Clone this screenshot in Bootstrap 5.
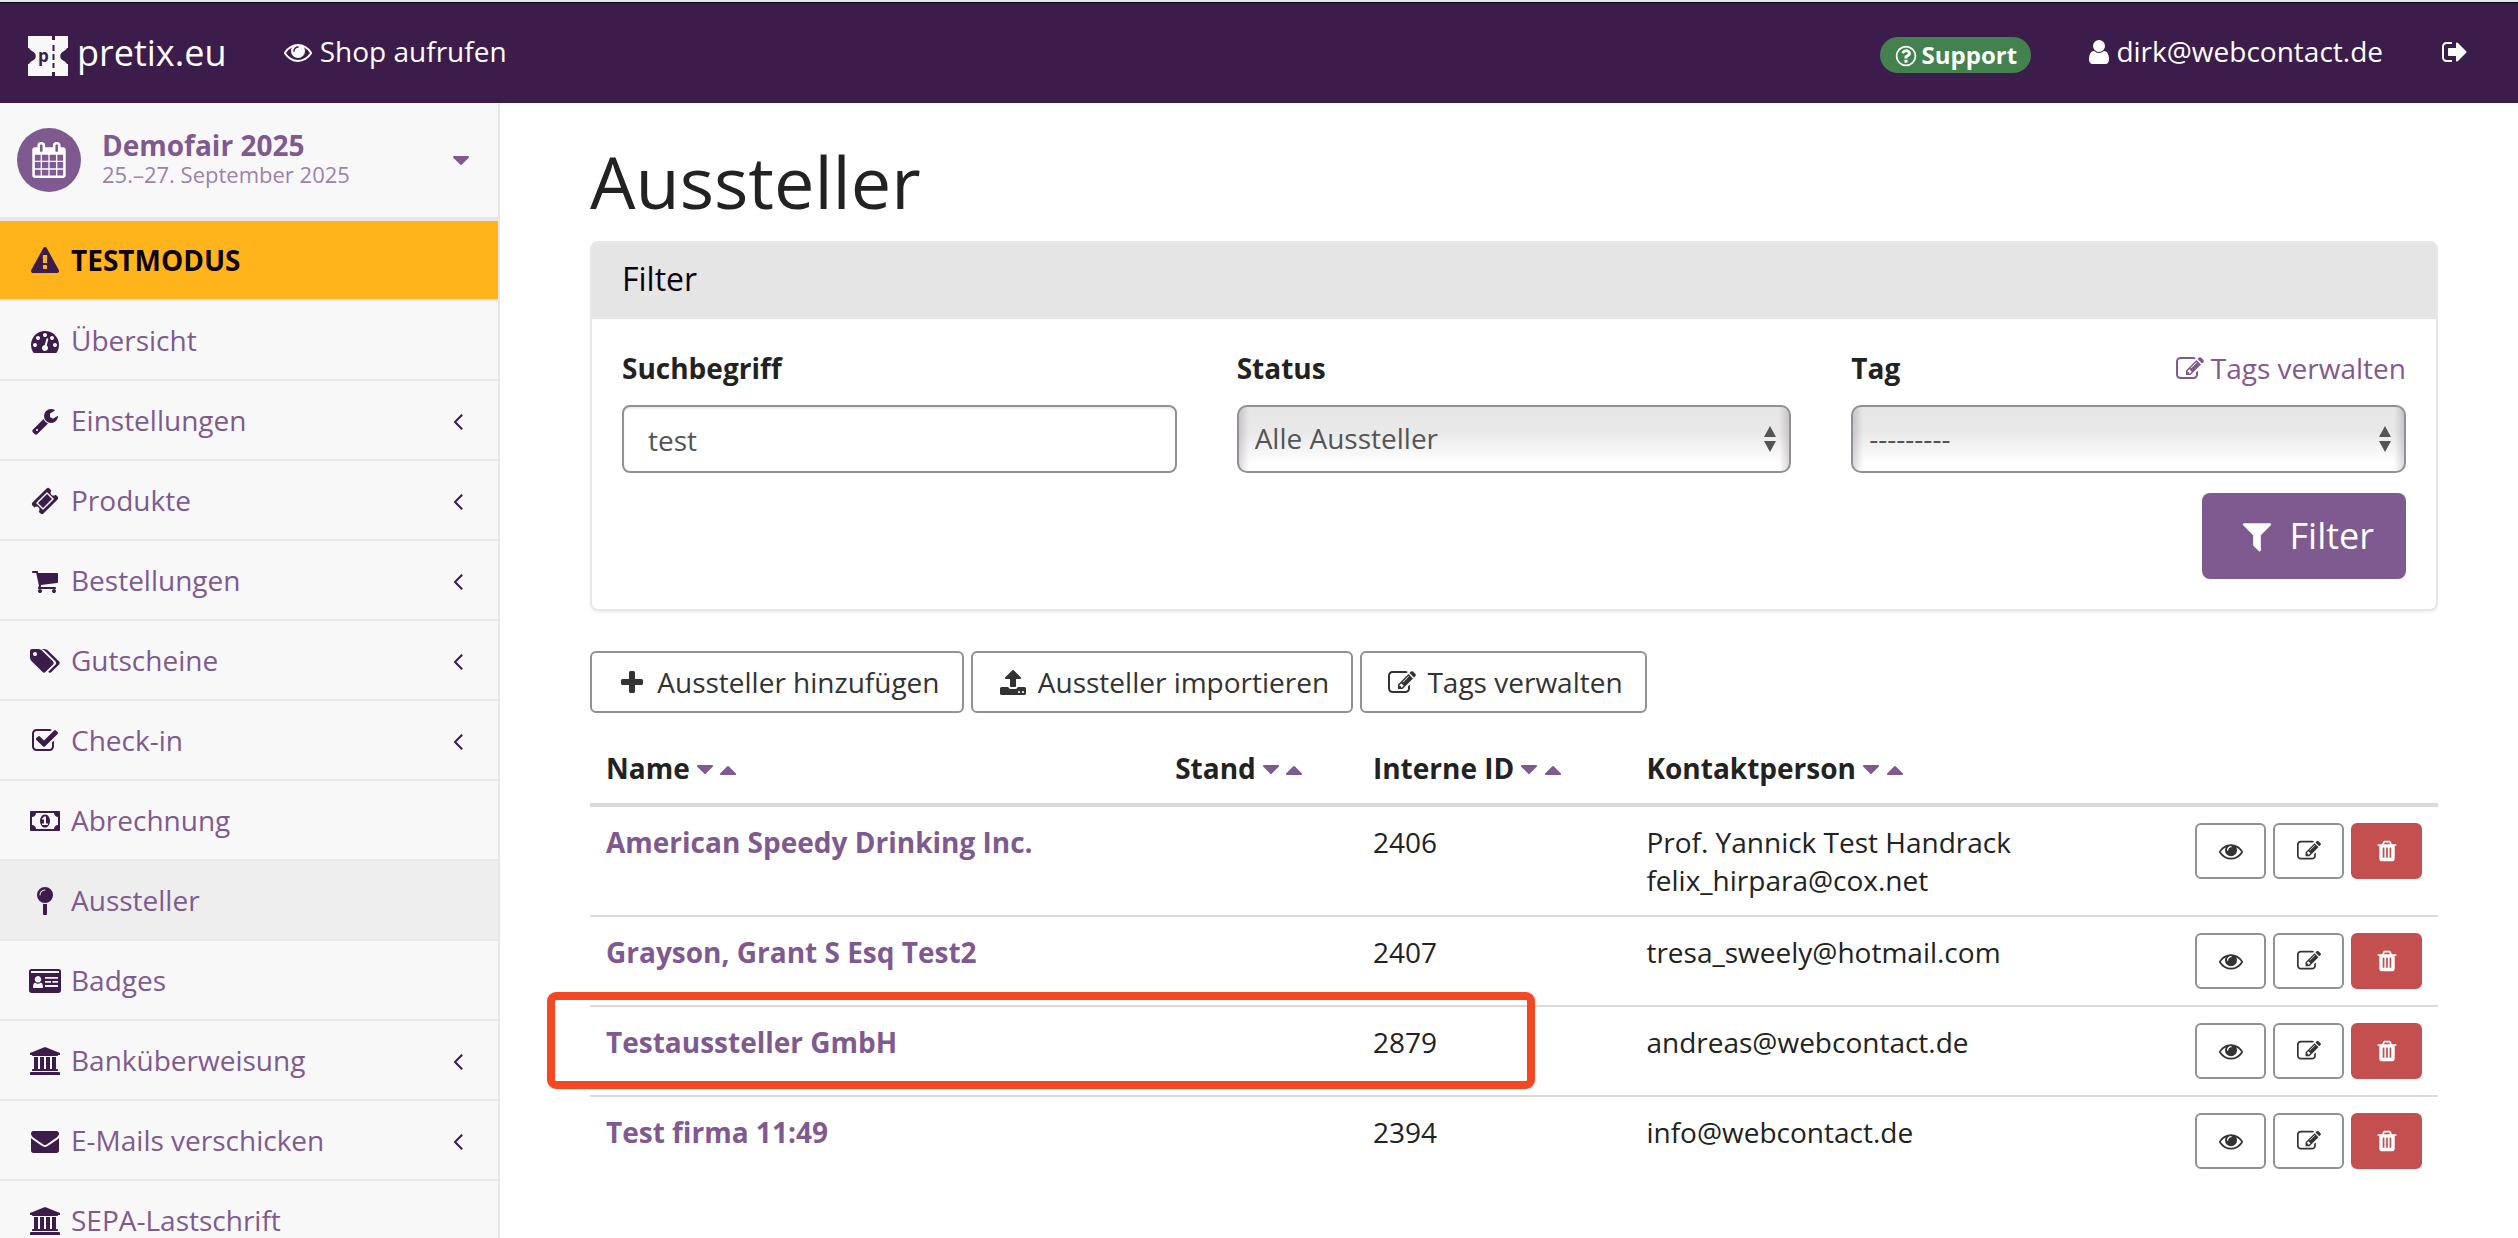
<!DOCTYPE html>
<html lang="de">
<head>
<meta charset="utf-8">
<meta name="viewport" content="width=device-width, initial-scale=1">
<title>Aussteller – pretix.eu</title>
<link href="https://cdn.jsdelivr.net/npm/bootstrap@5.3.0/dist/css/bootstrap.min.css" rel="stylesheet">
<style>
:root { --brand: #7f5a91; --brand-dark: #3b1c4a; --line: #e7e7e7; --edge: #919193; }
body { font-family: "Open Sans", "Noto Sans", sans-serif; font-size: 28px; line-height: 38px; color: #222; background: #fff; }
a { color: var(--brand); text-decoration: none; }
.ico { height: 28px; width: 28px; fill: currentColor; vertical-align: -4px; flex: none; }
.ico-wide { width: 36px; }
.ico-caret { width: 16px; }
.ico-user { width: 20px; }

.topbar { background: var(--brand-dark); border-top: 2px solid #e4e6ea; box-shadow: inset 0 1px #0c0414; padding: 29px 49px 27px 28px; line-height: 40px; }
.topbar a { color: #fff; }
.brand-name { font-size: 36px; line-height: 44px; margin-left: 9px; }
.brand-mark { width: 40px; height: 40px; margin-top: 5px; }
.nav-gap { margin-left: 58px; }
.support-pill { background: #43814f; border-radius: 18px; font-size: 24px; font-weight: 700; line-height: 36px; padding: 0 14px; margin-top: 6px; }
.support-pill .ico { width: 24px; height: 24px; margin-right: 4px; }

.sidebar { width: 500px; flex: none; background: #f8f8f8; border-right: 2px solid var(--line); }
.event-head { height: 118px; border-bottom: 4px solid var(--line); padding: 0 23px 0 17px; }
.event-dot { width: 64px; height: 64px; border-radius: 50%; background: var(--brand); color: #fff; }
.event-dot .ico { width: 36px; height: 36px; }
.event-text { line-height: 29px; padding-left: 21px; }
.event-text small { font-size: 22px; opacity: .75; }
.side-link { line-height: 40px; padding: 19px 26px 19px 29px; border-bottom: 2px solid var(--line); white-space: nowrap; }
.side-link .ico { margin-top: 7px; color: var(--brand-dark); }
.side-link .lead-ico { width: 32px; margin-right: 10px; }
.side-link.current { background: #eee; }
.side-link.testmode { background: #ffb41c; color: #0d0212; font-weight: 700; }

.main-area { padding: 31px 80px 0 90px; }
.main-area h1 { font-size: 72px; font-weight: 400; line-height: 80px; margin-bottom: 20px; padding-top: 7px; }
.panel { border: 2px solid var(--line); border-radius: 8px; box-shadow: 0 2px 2px rgba(0,0,0,.05); margin-bottom: 40px; }
.panel-head { background: #e5e5e5; color: #0d0212; font-size: 32px; font-weight: 400; line-height: 36px; padding: 18px 30px 22px; margin: 0; border-radius: 4px 4px 0 0; }
.panel-body { padding: 30px; }
.field-label { font-weight: 700; }
.field-top { margin-bottom: 18px; }
.filter-grid { --bs-gutter-x: 60px; }
.filter-grid .form-control, .filter-grid .form-select { height: 68px; border: 2px solid var(--edge); color: #555; font-size: 28px; line-height: 40px; }
.filter-grid .form-control { padding: 12px 24px 10px; border-radius: 8px; box-shadow: inset 0 2px 2px rgba(0,0,0,.07); }
.filter-grid .form-select {
  border-radius: 10px; padding: 11px 50px 13px 16px;
  background:
    url("data:image/svg+xml,%3Csvg xmlns='http://www.w3.org/2000/svg' width='14' height='26'%3E%3Cpath fill='%23555' d='M7 0l6 11H1zM7 26l6-11H1z'/%3E%3C/svg%3E") no-repeat right 12px center / 14px 26px,
    linear-gradient(90deg, rgba(90,70,100,.22), transparent 10px, transparent calc(100% - 10px), rgba(90,70,100,.22)),
    linear-gradient(#e6e6e6, #e9e9e9 40%, #fff 90%);
}
.btn-filter { background: var(--brand); color: #fff; font-size: 36px; line-height: 46px; padding: 20px 32px; border: 0; border-radius: 8px; margin-top: 20px; }
.btn-filter .ico { width: 46px; height: 36px; vertical-align: -5px; }
.btn-plain { color: #333; border: 2px solid var(--edge); border-radius: 6px; font-size: 28px; line-height: 40px; padding: 9px 22px; background: #fff; }
.tool-row { gap: 7px; margin-bottom: 20px; }

.exh-table { --bs-table-bg: transparent; margin: 0; color: #222; table-layout: fixed; }
.exh-table > :not(caption) > * > * { padding: 16px; border-bottom: 0; border-top: 2px solid #dadada; color: inherit; }
.exh-table > thead > tr > th { border-top: 0; border-bottom: 4px solid #dadada; white-space: nowrap; }
.exh-table > tbody > tr:first-child > td { border-top: 0; }
.exh-table td a { font-weight: 700; }
.w-name { width: 30.8%; } .w-stand { width: 10.7%; } .w-id { width: 14.8%; } .w-act { width: 260px; }
.act-row { gap: 7px; }
.btn-act { width: 71px; height: 56px; border: 2px solid var(--edge); border-radius: 6px; background: #fff; color: #333; padding: 0; }
.btn-act .ico { width: 24px; height: 24px; }
.btn-act.remove { background: #c44f4f; border-color: #c44f4f; color: #fff; }
/* callout frame drawn over the row that the guide points to */
.callout-frame { position: absolute; left: -43px; top: -15px; width: 988px; height: 97px; border: 8px solid #f44723; border-radius: 9px; pointer-events: none; z-index: 2; }
</style>
</head>
<body class="vh-100 d-flex flex-column overflow-hidden">
<svg class="d-none" xmlns="http://www.w3.org/2000/svg">
<symbol id="eye" viewBox="0 0 1792 1792"><path d="M1664 960q-152-236-381-353 61 104 61 225 0 185-131.5 316.5t-316.5 131.5-316.5-131.5-131.5-316.5q0-121 61-225-229 117-381 353 133 205 333.5 326.5t434.5 121.5 434.5-121.5 333.5-326.5zm-720-384q0-20-14-34t-34-14q-125 0-214.5 89.5t-89.5 214.5q0 20 14 34t34 14 34-14 14-34q0-86 61-147t147-61q20 0 34-14t14-34zm848 384q0 34-20 69-140 230-376.5 368.5t-499.5 138.5-499.5-139-376.5-368q-20-35-20-69t20-69q140-229 376.5-368t499.5-139 499.5 139 376.5 368q20 35 20 69z"/></symbol>
<symbol id="edit" viewBox="0 0 1792 1792"><path d="M888 1184l116-116-152-152-116 116v56h96v96h56zm440-720q-16-16-33 1l-350 350q-17 17-1 33t33-1l350-350q17-17 1-33zm80 594v190q0 119-84.5 203.5t-203.5 84.5h-832q-119 0-203.5-84.5t-84.5-203.5v-832q0-119 84.5-203.5t203.5-84.5h832q63 0 117 25 15 7 18 23 3 17-9 29l-49 49q-14 14-32 8-23-6-45-6h-832q-66 0-113 47t-47 113v832q0 66 47 113t113 47h832q66 0 113-47t47-113v-126q0-13 9-22l64-64q15-15 35-7t20 29zm-96-738l288 288-672 672h-288v-288zm444 132l-92 92-288-288 92-92q28-28 68-28t68 28l152 152q28 28 28 68t-28 68z"/></symbol>
<symbol id="trash" viewBox="0 0 1792 1792"><path d="M704 1376v-704q0-14-9-23t-23-9h-64q-14 0-23 9t-9 23v704q0 14 9 23t23 9h64q14 0 23-9t9-23zm256 0v-704q0-14-9-23t-23-9h-64q-14 0-23 9t-9 23v704q0 14 9 23t23 9h64q14 0 23-9t9-23zm256 0v-704q0-14-9-23t-23-9h-64q-14 0-23 9t-9 23v704q0 14 9 23t23 9h64q14 0 23-9t9-23zm-544-992h448l-48-117q-7-9-17-11h-317q-10 2-17 11zm928 32v64q0 14-9 23t-23 9h-96v948q0 83-47 143.5t-113 60.5h-832q-66 0-113-58.5t-47-141.5v-952h-96q-14 0-23-9t-9-23v-64q0-14 9-23t23-9h309l70-167q15-37 54-63t79-26h320q40 0 79 26t54 63l70 167h309q14 0 23 9t9 23z"/></symbol>
<symbol id="help" viewBox="0 0 1792 1792"><path d="M1008 1200v160q0 14-9 23t-23 9h-160q-14 0-23-9t-9-23v-160q0-14 9-23t23-9h160q14 0 23 9t9 23zm256-496q0 50-15 90t-45.5 69-52 44-59.5 36q-32 18-46.5 28t-26 24-11.5 29v32q0 14-9 23t-23 9h-160q-14 0-23-9t-9-23v-68q0-35 10.5-64.5t24-47.5 39-35.5 41-25.5 44.5-21q53-25 75-43t22-49q0-42-43.5-71.5t-95.5-29.5q-56 0-95 27-29 20-80 83-9 12-25 12-11 0-19-6l-108-82q-10-7-12-20t5-23q122-192 349-192 129 0 238.5 89.5t109.5 214.5z"/><circle cx="896" cy="896" r="704" fill="none" stroke="currentColor" stroke-width="128"/></symbol>
<symbol id="user" viewBox="256 0 1280 1792"><path d="M1536 1399q0 109-62.5 187t-150.5 78h-854q-88 0-150.5-78t-62.5-187q0-85 8.5-160.5t31.5-152 58.5-131 94-89 134.5-34.5q131 128 313 128t313-128q76 0 134.5 34.5t94 89 58.5 131 31.5 152 8.5 160.5zm-256-887q0 159-112.5 271.5t-271.5 112.5-271.5-112.5-112.5-271.5 112.5-271.5 271.5-112.5 271.5 112.5 112.5 271.5z"/></symbol>
<symbol id="signout" viewBox="0 0 1792 1792"><path d="M704 1440q0 4 1 20t.5 26.5-3 23.5-10 19.5-20.5 6.5h-320q-119 0-203.5-84.5t-84.5-203.5v-704q0-119 84.5-203.5t203.5-84.5h320q13 0 22.5 9.5t9.5 22.5q0 4 1 20t.5 26.5-3 23.5-10 19.5-20.5 6.5h-320q-66 0-113 47t-47 113v704q0 66 47 113t113 47h312l11.5 1 11.5 3 8 5.5 7 9 2 13.5zm928-544q0 26-19 45l-544 544q-19 19-45 19t-45-19-19-45v-288h-448q-26 0-45-19t-19-45v-384q0-26 19-45t45-19h448v-288q0-26 19-45t45-19 45 19l544 544q19 19 19 45z"/></symbol>
<symbol id="calendar" viewBox="0 0 1792 1792"><path d="M192 1664h288v-288h-288v288zm352 0h320v-288h-320v288zm-352-352h288v-320h-288v320zm352 0h320v-320h-320v320zm-352-384h288v-288h-288v288zm736 736h320v-288h-320v288zm-384-736h320v-288h-320v288zm768 736h288v-288h-288v288zm-384-352h320v-320h-320v320zm-352-864v-288q0-13-9.5-22.5t-22.5-9.5h-64q-13 0-22.5 9.5t-9.5 22.5v288q0 13 9.5 22.5t22.5 9.5h64q13 0 22.5-9.5t9.5-22.5zm736 864h288v-320h-288v320zm-384-384h320v-288h-320v288zm384 0h288v-288h-288v288zm32-480v-288q0-13-9.5-22.5t-22.5-9.5h-64q-13 0-22.5 9.5t-9.5 22.5v288q0 13 9.5 22.5t22.5 9.5h64q13 0 22.5-9.5t9.5-22.5zm384-64v1280q0 52-38 90t-90 38h-1408q-52 0-90-38t-38-90v-1280q0-52 38-90t90-38h128v-96q0-66 47-113t113-47h64q66 0 113 47t47 113v96h384v-96q0-66 47-113t113-47h64q66 0 113 47t47 113v96h128q52 0 90 38t38 90z"/></symbol>
<symbol id="warn" viewBox="0 0 1792 1792"><path d="M1024 1375v-190q0-14-9.500-23.500t-22.500-9.500h-192q-13 0-22.500 9.500t-9.500 23.500v190q0 14 9.500 23.500t22.500 9.500h192q13 0 22.500-9.500t9.500-23.500zm-2-374l18-459q0-12-10-19-13-11-24-11h-220q-11 0-24 11-10 7-10 21l17 457q0 10 10 16.500t24 6.500h185q14 0 23.500-6.500t10.500-16.500zm-14-934l768 1408q35 63-2 126-17 29-46.500 46t-63.500 17h-1536q-34 0-63.500-17t-46.500-46q-37-63-2-126l768-1408q17-31 47-49t65-18 65 18 47 49z"/></symbol>
<symbol id="dash" viewBox="0 0 1792 1792"><path d="M384 1152q0-53-37.5-90.5t-90.5-37.5-90.5 37.5-37.5 90.5 37.5 90.5 90.5 37.5 90.5-37.5 37.5-90.500zm192-448q0-53-37.5-90.5t-90.5-37.5-90.5 37.5-37.5 90.5 37.5 90.5 90.5 37.5 90.5-37.5 37.5-90.500zm428 481l101-382q6-26-7.5-48.5t-38.5-29.5-48 6.5-30 39.5l-101 382q-60 5-107 43.5t-63 98.5q-20 77 20 146t117 89 146-20 89-117q16-60-6-117t-72-91zm660-33q0-53-37.5-90.5t-90.5-37.5-90.5 37.5-37.5 90.5 37.5 90.5 90.5 37.5 90.5-37.5 37.5-90.5zm-640-640q0-53-37.5-90.5t-90.5-37.5-90.5 37.5-37.5 90.5 37.5 90.5 90.5 37.5 90.5-37.5 37.5-90.5zm448 192q0-53-37.5-90.5t-90.5-37.5-90.5 37.5-37.5 90.5 37.5 90.5 90.5 37.5 90.5-37.5 37.5-90.5zm320 448q0 261-141 483-19 29-54 29h-1402q-35 0-54-29-141-221-141-483 0-182 71-348t191-286 286-191 348-71 348 71 286 191 191 286 71 348z"/></symbol>
<symbol id="wrench" viewBox="0 0 1792 1792"><path d="M448 1472q0-26-19-45t-45-19-45 19-19 45 19 45 45 19 45-19 19-45zm644-420l-682 682q-37 37-90 37-52 0-91-37l-106-108q-38-36-38-90 0-53 38-91l681-681q39 98 114.5 173.5t173.5 114.5zm634-435q0 39-23 106-47 134-164.5 217.5t-258.5 83.5q-185 0-316.5-131.5t-131.5-316.5 131.5-316.5 316.5-131.5q58 0 121.5 16.5t107.5 46.5q16 11 16 28t-16 28l-293 169v224l193 107q5-3 79-48.5t135.5-81 70.5-35.5q15 0 23.5 10t8.5 25z"/></symbol>
<symbol id="ticket" viewBox="0 0 1792 1792"><path d="M1024 452l316 316-572 572-316-316zm-211 979l618-618q19-19 19-45t-19-45l-362-362q-18-18-45-18t-45 18l-618 618q-19 19-19 45t19 45l362 362q18 18 45 18t45-18zm889-637l-907 908q-37 37-90.5 37t-90.5-37l-126-126q56-56 56-136t-56-136-136-56-136 56l-125-126q-37-37-37-90.5t37-90.5l907-906q37-37 90.5-37t90.5 37l125 125q-56 56-56 136t56 136 136 56 136-56l126 125q37 37 37 90.5t-37 90.5z"/></symbol>
<symbol id="cart" viewBox="0 0 1792 1792"><path d="M704 1536q0 52-38 90t-90 38-90-38-38-90 38-90 90-38 90 38 38 90zm896 0q0 52-38 90t-90 38-90-38-38-90 38-90 90-38 90 38 38 90zm128-1088v512q0 24-16.5 42.5t-40.5 21.5l-1044 122q13 60 13 70 0 16-24 64h920q26 0 45 19t19 45-19 45-45 19h-1024q-26 0-45-19t-19-45q0-11 8-31.5t16-36 21.5-40 15.5-29.5l-177-823h-204q-26 0-45-19t-19-45 19-45 45-19h256q16 0 28.5 6.5t19.5 15.5 13 24.5 8 26 5.5 29.5 4.5 26h1201q26 0 45 19t19 45z"/></symbol>
<symbol id="tags" viewBox="0 0 1920 1792"><path d="M448 448q0-53-37.5-90.5t-90.5-37.5-90.5 37.5-37.5 90.5 37.5 90.5 90.5 37.5 90.5-37.5 37.5-90.5zm1067 576q0 53-37 90l-491 492q-39 37-91 37-53 0-90-37l-715-716q-38-37-64.5-101t-26.5-117v-416q0-52 38-90t90-38h416q53 0 117 26.5t102 64.5l715 714q37 39 37 91zm384 0q0 53-37 90l-491 492q-39 37-91 37-36 0-59-14t-53-45l470-470q37-37 37-90 0-52-37-91l-715-714q-38-38-102-64.5t-117-26.5h224q53 0 117 26.5t102 64.5l715 714q37 39 37 91z"/></symbol>
<symbol id="check" viewBox="0 0 1792 1792"><path d="M1472 930v318q0 119-84.5 203.5t-203.5 84.5h-832q-119 0-203.5-84.5t-84.5-203.5v-832q0-119 84.5-203.5t203.5-84.5h832q63 0 117 25 15 7 18 23 3 17-9 29l-49 49q-10 10-23 10-3 0-9-2-23-6-45-6h-832q-66 0-113 47t-47 113v832q0 66 47 113t113 47h832q66 0 113-47t47-113v-254q0-13 9-22l64-64q10-10 23-10 6 0 12 3 20 8 20 29zm231-489l-814 814q-24 24-57 24t-57-24l-430-430q-24-24-24-57t24-57l110-110q24-24 57-24t57 24l263 263 647-647q24-24 57-24t57 24l110 110q24 24 24 57t-24 57z"/></symbol>
<symbol id="money" viewBox="0 0 1920 1792"><path d="M768 1152h384v-96h-128v-448h-114l-148 137 77 80q42-37 55-57h2v288h-128v96zm512-256q0 70-21 142t-59.5 134-101.5 101-138 39-138-39-101.5-101-59.5-134-21-142 21-142 59.5-134 101.5-101 138-39 138 39 101.5 101 59.5 134 21 142zm512 256v-512q-106 0-181-75t-75-181h-1152q0 106-75 181t-181 75v512q106 0 181 75t75 181h1152q0-106 75-181t181-75zm128-832v1152q0 26-19 45t-45 19h-1792q-26 0-45-19t-19-45v-1152q0-26 19-45t45-19h1792q26 0 45 19t19 45z"/></symbol>
<symbol id="pin" viewBox="0 0 1792 1792"><path d="M896 1088q66 0 128-15v655q0 26-19 45t-45 19h-128q-26 0-45-19t-19-45v-655q62 15 128 15zm0-1088q212 0 362 150t150 362-150 362-362 150-362-150-150-362 150-362 362-150zm0 224q14 0 23-9t9-23-9-23-23-9q-146 0-249 103t-103 249q0 14 9 23t23 9 23-9 9-23q0-119 84.5-203.5t203.5-84.5z"/></symbol>
<symbol id="idcard" viewBox="0 0 2048 1792"><path fill-rule="evenodd" d="M160 128h1728q66 0 113 47t47 113v1216q0 66-47 113t-113 47H160q-66 0-113-47T0 1504V288q0-66 47-113t113-47zM128 256v128h1792V256zM256 1300q0 44 44 44h552q44 0 44-44c0-170-50-290-154-292-92 80-240 80-332 0-104 2-154 122-154 292zM576 576a210 210 0 1 0 .1 0zM1024 640v110h832V640zM1024 896v110h384V896zM1500 896v110h356V896zM1024 1152v120h832v-120z"/></symbol>
<symbol id="bank" viewBox="0 0 1920 1792"><path d="M960 0l960 384v128h-128q0 26-20.5 45t-48.5 19h-1526q-28 0-48.5-19t-20.5-45h-128v-128zm-704 640h256v768h128v-768h256v768h128v-768h256v768h128v-768h256v768h59q28 0 48.5 19t20.5 45v64h-1664v-64q0-26 20.5-45t48.5-19h59v-768zm1595 960q28 0 48.5 19t20.5 45v128h-1920v-128q0-26 20.5-45t48.5-19h1782z"/></symbol>
<symbol id="mail" viewBox="0 0 1792 1792"><path d="M1792 710v794q0 66-47 113t-113 47h-1472q-66 0-113-47t-47-113v-794q44 49 101 87 362 246 497 345 57 42 92.5 65.5t94.5 48 110 24.5h2q51 0 110-24.5t94.5-48 92.5-65.5q170-123 498-345 57-39 100-87zm0-294q0 79-49 151t-122 123q-376 261-468 325-10 7-42.5 31t-54 38.5-52 32.5-57.5 27-50 9h-2q-23 0-50-9t-57.5-27-52-32.5-54-38.5-42.5-31q-91-64-262-182.5t-205-142.5q-62-42-117-115.5t-55-136.5q0-78 41.5-130t118.5-52h1472q65 0 112.5 47t47.5 113z"/></symbol>
<symbol id="funnel" viewBox="0 0 1792 1792"><path d="M1595 295q17 41-14 70l-493 493v742q0 42-39 59-13 5-25 5-27 0-45-19l-256-256q-19-19-19-45v-486l-493-493q-31-29-14-70 17-39 59-39h1280q42 0 59 39z"/></symbol>
<symbol id="plus" viewBox="0 0 1792 1792"><path d="M1600 736v192q0 40-28 68t-68 28h-416v416q0 40-28 68t-68 28h-192q-40 0-68-28t-28-68v-416h-416q-40 0-68-28t-28-68v-192q0-40 28-68t68-28h416v-416q0-40 28-68t68-28h192q40 0 68 28t28 68v416h416q40 0 68 28t28 68z"/></symbol>
<symbol id="upload" viewBox="0 0 1792 1792"><path d="M1344 1472q0-26-19-45t-45-19-45 19-19 45 19 45 45 19 45-19 19-45zm256 0q0-26-19-45t-45-19-45 19-19 45 19 45 45 19 45-19 19-45zm128-224v320q0 40-28 68t-68 28h-1472q-40 0-68-28t-28-68v-320q0-40 28-68t68-28h427q21 56 70.5 92t110.5 36h256q61 0 110.5-36t70.5-92h427q40 0 68 28t28 68zm-325-648q-17 40-59 40h-256v448q0 26-19 45t-45 19h-256q-26 0-45-19t-19-45v-448h-256q-42 0-59-40-17-39 14-69l448-448q18-19 45-19t45 19l448 448q31 30 14 69z"/></symbol>
<symbol id="angle" viewBox="0 0 1792 1792"><path d="M1203 544q0 13-10 23l-393 393 393 393q10 10 10 23t-10 23l-50 50q-10 10-23 10t-23-10l-466-466q-10-10-10-23t10-23l466-466q10-10 23-10t23 10l50 50q10 10 10 23z"/></symbol>
<symbol id="down" viewBox="384 0 1024 1792"><path d="M1408 704q0 26-19 45l-448 448q-19 19-45 19t-45-19l-448-448q-19-19-19-45t19-45 45-19h896q26 0 45 19t19 45z"/></symbol>
<symbol id="up" viewBox="384 0 1024 1792"><path d="M1408 1216q0 26-19 45t-45 19h-896q-26 0-45-19t-19-45 19-45l448-448q19-19 45-19t45 19l448 448q19 19 19 45z"/></symbol>
</svg>

<nav class="topbar d-flex align-items-start" aria-label="Hauptnavigation">
  <a href="#" class="d-flex">
    <svg class="brand-mark" viewBox="0 0 40 40" aria-hidden="true">
      <path fill="#f8f8f8" d="M0 0h24v4h3V0h13v12c-2 0-1.500 2-4 3-5 2-5 8 0 10 2.500 1 2 3 4 3v12H27v-4h-3v4H0V28c2 0 1.500-2 4-3 5-2 5-8 0-10-2.500-1-2-3-4-3z"/>
      <path stroke="#3b1c4a" stroke-width="2" d="M25.500 9v6M25.500 18v6M25.500 27v5"/>
      <text x="10" y="26" font-family="Open Sans, sans-serif" font-weight="700" font-size="17" fill="#3b1c4a">p</text>
    </svg>
    <span class="brand-name">pretix.eu</span>
  </a>
  <a href="#" class="nav-gap"><svg class="ico" aria-hidden="true"><use href="#eye"/></svg> Shop aufrufen</a>
  <div class="ms-auto d-flex align-items-start">
    <a href="#" class="support-pill"><svg class="ico" aria-hidden="true"><use href="#help"/></svg>Support</a>
    <a href="#" class="nav-gap"><svg class="ico ico-user" aria-hidden="true"><use href="#user"/></svg> dirk@webcontact.de</a>
    <a href="#" class="nav-gap" aria-label="Abmelden"><svg class="ico" aria-hidden="true"><use href="#signout"/></svg></a>
  </div>
</nav>

<div class="d-flex flex-grow-1 overflow-hidden">
  <aside class="sidebar overflow-hidden">
    <a href="#" class="event-head d-flex align-items-center">
      <span class="event-dot d-flex align-items-center justify-content-center flex-shrink-0"><svg class="ico" aria-hidden="true"><use href="#calendar"/></svg></span>
      <span class="event-text d-flex flex-column flex-grow-1"><strong>Demofair 2025</strong><small>25.–27. September 2025</small></span>
      <svg class="ico" aria-hidden="true"><use href="#down"/></svg>
    </a>
    <a href="#" class="side-link testmode d-flex"><svg class="ico lead-ico" aria-hidden="true"><use href="#warn"/></svg><span>TESTMODUS</span></a>
    <a href="#" class="side-link d-flex"><svg class="ico lead-ico" aria-hidden="true"><use href="#dash"/></svg><span>Übersicht</span></a>
    <a href="#" class="side-link d-flex"><svg class="ico lead-ico" aria-hidden="true"><use href="#wrench"/></svg><span>Einstellungen</span><svg class="ico ms-auto" aria-hidden="true"><use href="#angle"/></svg></a>
    <a href="#" class="side-link d-flex"><svg class="ico lead-ico" aria-hidden="true"><use href="#ticket"/></svg><span>Produkte</span><svg class="ico ms-auto" aria-hidden="true"><use href="#angle"/></svg></a>
    <a href="#" class="side-link d-flex"><svg class="ico lead-ico" aria-hidden="true"><use href="#cart"/></svg><span>Bestellungen</span><svg class="ico ms-auto" aria-hidden="true"><use href="#angle"/></svg></a>
    <a href="#" class="side-link d-flex"><svg class="ico lead-ico" aria-hidden="true"><use href="#tags"/></svg><span>Gutscheine</span><svg class="ico ms-auto" aria-hidden="true"><use href="#angle"/></svg></a>
    <a href="#" class="side-link d-flex"><svg class="ico lead-ico" aria-hidden="true"><use href="#check"/></svg><span>Check-in</span><svg class="ico ms-auto" aria-hidden="true"><use href="#angle"/></svg></a>
    <a href="#" class="side-link d-flex"><svg class="ico lead-ico" aria-hidden="true"><use href="#money"/></svg><span>Abrechnung</span></a>
    <a href="#" class="side-link current d-flex" aria-current="page"><svg class="ico lead-ico" aria-hidden="true"><use href="#pin"/></svg><span>Aussteller</span></a>
    <a href="#" class="side-link d-flex"><svg class="ico lead-ico" aria-hidden="true"><use href="#idcard"/></svg><span>Badges</span></a>
    <a href="#" class="side-link d-flex"><svg class="ico lead-ico" aria-hidden="true"><use href="#bank"/></svg><span>Banküberweisung</span><svg class="ico ms-auto" aria-hidden="true"><use href="#angle"/></svg></a>
    <a href="#" class="side-link d-flex"><svg class="ico lead-ico" aria-hidden="true"><use href="#mail"/></svg><span>E-Mails verschicken</span><svg class="ico ms-auto" aria-hidden="true"><use href="#angle"/></svg></a>
    <a href="#" class="side-link d-flex"><svg class="ico lead-ico" aria-hidden="true"><use href="#bank"/></svg><span>SEPA-Lastschrift</span></a>
  </aside>

  <main class="main-area flex-grow-1">
    <h1>Aussteller</h1>

    <form class="panel">
      <h2 class="panel-head">Filter</h2>
      <div class="panel-body">
        <div class="row filter-grid">
          <div class="col-4">
            <div class="field-top d-flex"><label class="field-label" for="q">Suchbegriff</label></div>
            <input class="form-control" id="q" type="text" value="test">
          </div>
          <div class="col-4">
            <div class="field-top d-flex"><label class="field-label" for="status">Status</label></div>
            <select class="form-select" id="status"><option>Alle Aussteller</option></select>
          </div>
          <div class="col-4">
            <div class="field-top d-flex justify-content-between"><label class="field-label" for="tag">Tag</label><a href="#"><svg class="ico" aria-hidden="true"><use href="#edit"/></svg> Tags verwalten</a></div>
            <select class="form-select" id="tag"><option>---------</option></select>
          </div>
        </div>
        <div class="d-flex justify-content-end"><button type="button" class="btn btn-filter"><svg class="ico" aria-hidden="true"><use href="#funnel"/></svg> Filter</button></div>
      </div>
    </form>

    <div class="tool-row d-flex">
      <a href="#" class="btn btn-plain" role="button"><svg class="ico ico-wide" aria-hidden="true"><use href="#plus"/></svg> Aussteller hinzufügen</a>
      <a href="#" class="btn btn-plain" role="button"><svg class="ico ico-wide" aria-hidden="true"><use href="#upload"/></svg> Aussteller importieren</a>
      <a href="#" class="btn btn-plain" role="button"><svg class="ico ico-wide" aria-hidden="true"><use href="#edit"/></svg> Tags verwalten</a>
    </div>

    <table class="table exh-table">
      <colgroup><col class="w-name"><col class="w-stand"><col class="w-id"><col><col class="w-act"></colgroup>
      <thead>
        <tr>
          <th>Name <a href="#" aria-label="Absteigend"><svg class="ico ico-caret"><use href="#down"/></svg></a> <a href="#" aria-label="Aufsteigend"><svg class="ico ico-caret"><use href="#up"/></svg></a></th>
          <th>Stand <a href="#" aria-label="Absteigend"><svg class="ico ico-caret"><use href="#down"/></svg></a> <a href="#" aria-label="Aufsteigend"><svg class="ico ico-caret"><use href="#up"/></svg></a></th>
          <th>Interne ID <a href="#" aria-label="Absteigend"><svg class="ico ico-caret"><use href="#down"/></svg></a> <a href="#" aria-label="Aufsteigend"><svg class="ico ico-caret"><use href="#up"/></svg></a></th>
          <th>Kontaktperson <a href="#" aria-label="Absteigend"><svg class="ico ico-caret"><use href="#down"/></svg></a> <a href="#" aria-label="Aufsteigend"><svg class="ico ico-caret"><use href="#up"/></svg></a></th>
          <th></th>
        </tr>
      </thead>
      <tbody>
        <tr>
          <td><a href="#">American Speedy Drinking Inc.</a></td><td></td><td>2406</td><td>Prof. Yannick Test Handrack<br>felix_hirpara@cox.net</td>
          <td><div class="act-row d-flex justify-content-end"><button class="btn btn-act d-flex align-items-center justify-content-center" aria-label="Ansehen"><svg class="ico"><use href="#eye"/></svg></button><button class="btn btn-act d-flex align-items-center justify-content-center" aria-label="Bearbeiten"><svg class="ico"><use href="#edit"/></svg></button><button class="btn btn-act remove d-flex align-items-center justify-content-center" aria-label="Löschen"><svg class="ico"><use href="#trash"/></svg></button></div></td>
        </tr>
        <tr>
          <td><a href="#">Grayson, Grant S Esq Test2</a></td><td></td><td>2407</td><td>tresa_sweely@hotmail.com</td>
          <td><div class="act-row d-flex justify-content-end"><button class="btn btn-act d-flex align-items-center justify-content-center" aria-label="Ansehen"><svg class="ico"><use href="#eye"/></svg></button><button class="btn btn-act d-flex align-items-center justify-content-center" aria-label="Bearbeiten"><svg class="ico"><use href="#edit"/></svg></button><button class="btn btn-act remove d-flex align-items-center justify-content-center" aria-label="Löschen"><svg class="ico"><use href="#trash"/></svg></button></div></td>
        </tr>
        <tr>
          <td class="position-relative"><a href="#">Testaussteller GmbH</a><span class="callout-frame"></span></td><td></td><td>2879</td><td>andreas@webcontact.de</td>
          <td><div class="act-row d-flex justify-content-end"><button class="btn btn-act d-flex align-items-center justify-content-center" aria-label="Ansehen"><svg class="ico"><use href="#eye"/></svg></button><button class="btn btn-act d-flex align-items-center justify-content-center" aria-label="Bearbeiten"><svg class="ico"><use href="#edit"/></svg></button><button class="btn btn-act remove d-flex align-items-center justify-content-center" aria-label="Löschen"><svg class="ico"><use href="#trash"/></svg></button></div></td>
        </tr>
        <tr>
          <td><a href="#">Test firma 11:49</a></td><td></td><td>2394</td><td>info@webcontact.de</td>
          <td><div class="act-row d-flex justify-content-end"><button class="btn btn-act d-flex align-items-center justify-content-center" aria-label="Ansehen"><svg class="ico"><use href="#eye"/></svg></button><button class="btn btn-act d-flex align-items-center justify-content-center" aria-label="Bearbeiten"><svg class="ico"><use href="#edit"/></svg></button><button class="btn btn-act remove d-flex align-items-center justify-content-center" aria-label="Löschen"><svg class="ico"><use href="#trash"/></svg></button></div></td>
        </tr>
      </tbody>
    </table>
  </main>
</div>
<script src="https://cdn.jsdelivr.net/npm/bootstrap@5.3.0/dist/js/bootstrap.bundle.min.js"></script>
</body>
</html>
